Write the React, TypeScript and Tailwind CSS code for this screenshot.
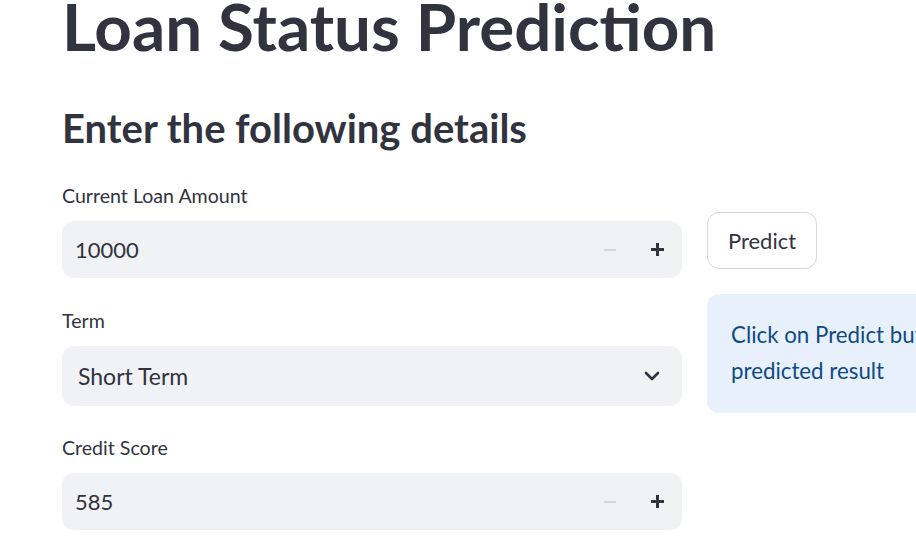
import React from "react";

const font = { fontFamily: "Lato, 'Noto Sans', sans-serif" };

const Label = ({ children }: { children: React.ReactNode }) => (
  <div className="text-[19.6px] leading-[24px] text-[#31333f] mb-[13px]">{children}</div>
);

const NumberInput = ({ value }: { value: string }) => (
  <div className="h-[57px] w-full rounded-[12px] bg-[#f0f2f6] flex items-center pl-[13px] pr-[18px]">
    <span className="flex-1 text-[22px] text-[#31333f]">{value}</span>
    <span className="w-[12px] h-[2px] bg-[#d3d6dc] mr-[35px]" />
    <svg width="13" height="13" viewBox="0 0 13 13">
      <rect x="5" y="0" width="3" height="13" fill="#31333f" />
      <rect x="0" y="5" width="13" height="3" fill="#31333f" />
    </svg>
  </div>
);

export default function App() {
  return (
    <div className="w-[916px] h-[559px] overflow-hidden bg-white" style={font}>
      <div className="pl-[62px]">
        <h1 className="text-[65.5px] font-bold leading-[80px] -mt-[14px] text-[#31333f] whitespace-nowrap">
          Loan Status Prediction
        </h1>
        <h2 className="text-[40px] font-bold leading-[50px] mt-[37px] text-[#31333f] whitespace-nowrap">
          Enter the following details
        </h2>
        <div className="flex items-start mt-[31px]">
          <div className="w-[620px] shrink-0 flex flex-col">
            <Label>Current Loan Amount</Label>
            <NumberInput value="10000" />
            <div className="mt-[31px]" />
            <Label>Term</Label>
            <div className="h-[60px] w-full rounded-[12px] bg-[#f0f2f6] flex items-center pl-[16px] pr-[22px]">
              <span className="flex-1 text-[23px] text-[#31333f]">Short Term</span>
              <svg width="16" height="10" viewBox="0 0 16 10" fill="none">
                <path d="M2 2l6 6 6-6" stroke="#31333f" strokeWidth="2.6" strokeLinecap="round" strokeLinejoin="round" />
              </svg>
            </div>
            <div className="mt-[30px]" />
            <Label>Credit Score</Label>
            <NumberInput value="585" />
          </div>
          <div className="ml-[25px] w-[600px] shrink-0 pt-[28px]">
            <button className="h-[57px] w-[110px] rounded-[12px] border border-[#d6d6d9] bg-white text-[22px] text-[#31333f]">
              Predict
            </button>
            <div className="mt-[25px] h-[119px] rounded-[12px] bg-[#e8f1fb] pl-[24px] pt-[23px] text-[22.3px] leading-[36px] text-[#0e4a85]">
              <div>Click on Predict button to see the</div>
              <div>predicted result</div>
            </div>
          </div>
        </div>
      </div>
    </div>
  );
}
